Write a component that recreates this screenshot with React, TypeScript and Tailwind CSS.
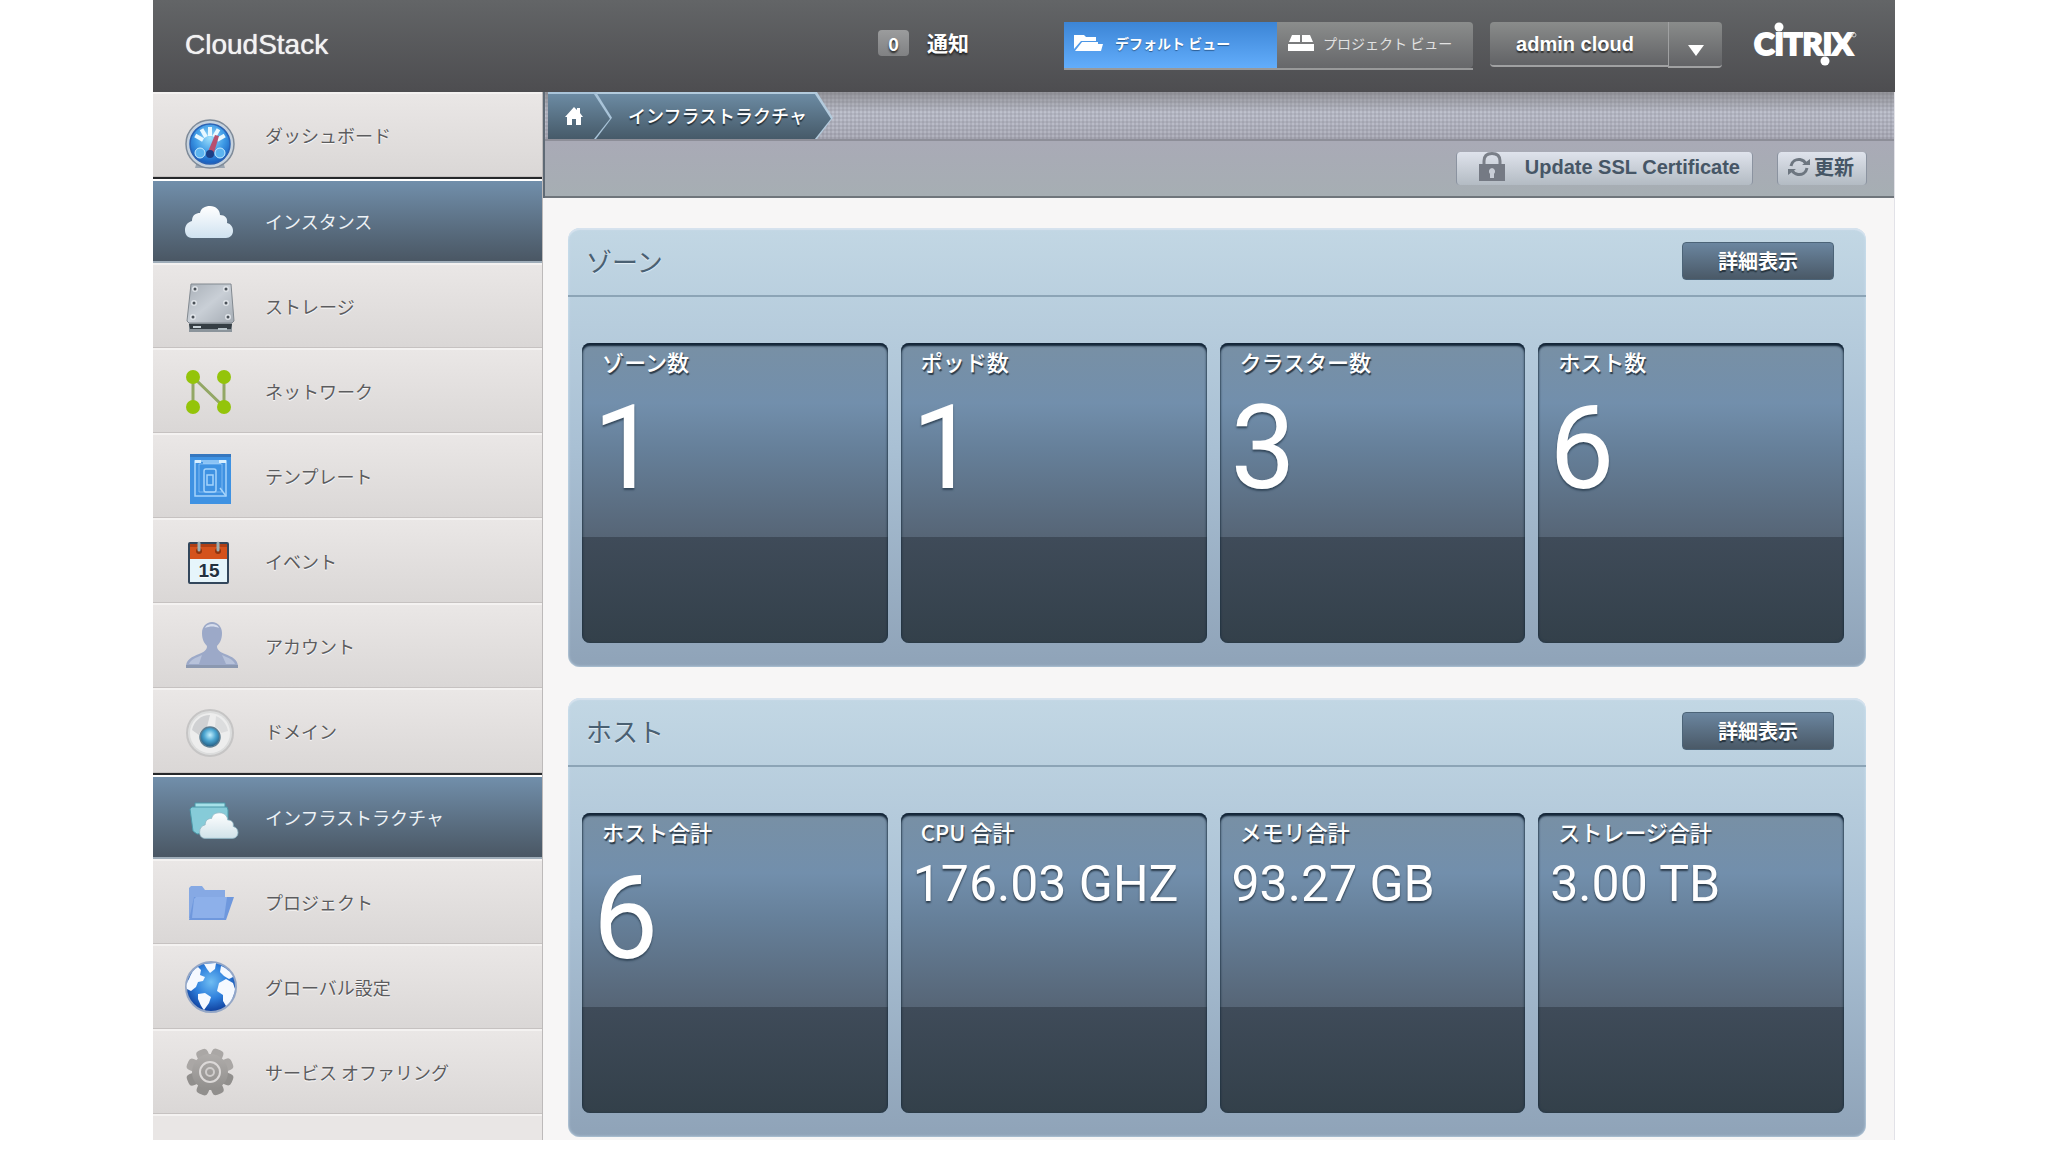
import type { ReactNode } from "react";

const cloudPath =
  "M9 53 C4 53 2 49 2 45 C2 40 5 37 9 36 C9 30 13 28 17 28 C18 23 22 21 27 21 C33 21 37 25 37 30 C42 30 45 33 44 38 C48 39 50 42 50 46 C50 50 47 53 43 53 Z";

function IconBox({ children }: { children: ReactNode }) {
  return (
    <svg viewBox="0 0 52 72" className="h-[72px] w-[52px] shrink-0 overflow-visible" aria-hidden="true">
      {children}
    </svg>
  );
}

function DashboardIcon() {
  const ticks = [-150, -120, -90, -60, -30];
  return (
    <IconBox>
      <defs>
        <radialGradient id="gauge" cx="0.5" cy="0.35" r="0.6">
          <stop offset="0" stopColor="#9fe0fb" />
          <stop offset="0.6" stopColor="#3f9be6" />
          <stop offset="1" stopColor="#1c66c4" />
        </radialGradient>
      </defs>
      <path d="M14 62 L40 62 L42 69 L12 69 Z" fill="#9aa5b1" />
      <circle cx="27" cy="45" r="24" fill="#c6d2de" stroke="#7f8b99" strokeWidth="1.5" />
      <circle cx="27" cy="45" r="20" fill="url(#gauge)" stroke="#2a62b4" strokeWidth="1.5" />
      {ticks.map((t) => (
        <line key={t} x1="35" y1="45" x2="44" y2="45" stroke="#e8f8ff" strokeWidth="4" transform={`rotate(${t} 27 45)`} />
      ))}
      <circle cx="17" cy="54" r="5" fill="#5cb4f0" stroke="#c8ecff" strokeWidth="1" />
      <circle cx="37" cy="54" r="5" fill="#5cb4f0" stroke="#c8ecff" strokeWidth="1" />
      <path d="M24 55 L32 36 L36 37 L30 57 Z" fill="#b8506f" />
      <circle cx="27" cy="55" r="4" fill="#1c3f86" />
    </IconBox>
  );
}

function CloudIcon() {
  return (
    <IconBox>
      <defs>
        <linearGradient id="cloud" x1="0" y1="0" x2="0" y2="1">
          <stop offset="0" stopColor="#ffffff" />
          <stop offset="1" stopColor="#cfe2f0" />
        </linearGradient>
      </defs>
      <path d={cloudPath} fill="url(#cloud)" />
    </IconBox>
  );
}

function StorageIcon() {
  const screws = [
    [12, 19],
    [43, 19],
    [11, 33],
    [43, 33],
    [10, 47],
    [45, 47],
  ];
  return (
    <IconBox>
      <defs>
        <linearGradient id="plate" x1="0" y1="0" x2="1" y2="1">
          <stop offset="0" stopColor="#a9b0b8" />
          <stop offset="0.5" stopColor="#c9cfd6" />
          <stop offset="1" stopColor="#a4abb3" />
        </linearGradient>
      </defs>
      <path d="M6 52 L49 52 L49 62 L6 62 Z" fill="#8b949b" />
      <path d="M6 54 L49 54 L48 59 L7 59 Z" fill="#353e44" />
      <path d="M8 14 L48 14 L51 51 L49 53 L6 53 L4 51 Z" fill="url(#plate)" stroke="#828990" strokeWidth="1" />
      {screws.map(([x, y]) => (
        <g key={`${x}-${y}`}>
          <circle cx={x} cy={y} r="3" fill="#dfe3e8" />
          <circle cx={x} cy={y} r="1.5" fill="#4a5158" />
        </g>
      ))}
      <rect x="10" y="56" width="8" height="2" fill="#c8d2d8" />
      <rect x="35" y="58" width="9" height="2" fill="#b7c2c8" />
    </IconBox>
  );
}

function NetworkIcon() {
  return (
    <IconBox>
      <path d="M10 52 V22 M13 25 L41 52 V22" fill="none" stroke="#93a765" strokeWidth="3" />
      <circle cx="10" cy="22" r="7" fill="#94c40a" />
      <circle cx="41" cy="22" r="7" fill="#94c40a" />
      <circle cx="10" cy="52" r="7" fill="#94c40a" />
      <circle cx="41" cy="52" r="7" fill="#94c40a" />
    </IconBox>
  );
}

function TemplateIcon() {
  return (
    <IconBox>
      <rect x="7" y="14" width="41" height="50" fill="#3f92e2" />
      <rect x="7" y="14" width="41" height="3" fill="#3577bf" />
      <g fill="none" stroke="#a5d4fb">
        <path d="M12 21 H43 V56 H12 Z" strokeWidth="1.5" />
        <path d="M16 24 H39 V52 H16 Z" strokeWidth="1" strokeOpacity="0.6" />
        <rect x="21" y="29" width="12" height="23" rx="2" strokeWidth="1.5" />
        <rect x="24" y="35" width="6" height="10" strokeWidth="1.5" />
        <path d="M37 48 L43 56 M20 23 H38" strokeWidth="1.5" />
      </g>
      <path d="M12 20 H18 V23 H12 Z M36 20 H43 V23 H36 Z" fill="#d8efff" />
    </IconBox>
  );
}

function EventIcon() {
  return (
    <IconBox>
      <rect x="6" y="18" width="39" height="40" rx="1" fill="#e6f5fb" stroke="#33475c" strokeWidth="2" />
      <path d="M7 19 H44 V34 H7 Z" fill="#d4521c" />
      <path d="M7 19 H44 V22 H7 Z" fill="#b03f14" />
      <circle cx="16" cy="26" r="3" fill="#8c3410" />
      <circle cx="35" cy="26" r="3" fill="#8c3410" />
      <path d="M16 25 V18 M35 25 V18" stroke="#9db0b4" strokeWidth="3" strokeLinecap="round" />
      <text x="26" y="52" textAnchor="middle" fontSize="19" fontWeight="700" fontFamily="Liberation Sans, sans-serif" fill="#23313f">
        15
      </text>
    </IconBox>
  );
}

function AccountIcon() {
  return (
    <IconBox>
      <path
        d="M29 12 C35 12 39 17 39 23 C39 29 37 33 34 36 C34 40 37 42 42 44 C49 47 55 49 55 57 L3 57 C3 49 9 47 16 44 C21 42 24 40 24 36 C21 33 19 29 19 23 C19 17 23 12 29 12 Z"
        fill="#9ca9c8"
      />
      <path d="M22 18 C23 15 26 14 29 14 C32 14 35 15 36 18 C31 16 27 16 22 18 Z" fill="#d6dded" />
      <path d="M6 54 C8 49 13 48 19 45 L16 54 Z M52 54 C50 49 45 48 39 45 L43 54 Z" fill="#b7c2da" />
      <path d="M3 55 H55 V58 H3 Z" fill="#8b98b0" />
    </IconBox>
  );
}

function DomainIcon() {
  return (
    <IconBox>
      <defs>
        <radialGradient id="lens" cx="0.5" cy="0.4" r="0.6">
          <stop offset="0" stopColor="#c4f1ff" />
          <stop offset="0.5" stopColor="#4ba4cf" />
          <stop offset="1" stopColor="#20597f" />
        </radialGradient>
      </defs>
      <circle cx="27" cy="38" r="23" fill="#dcdddd" stroke="#c6c5c5" strokeWidth="2" />
      <circle cx="27" cy="38" r="20" fill="#ededed" />
      <path d="M9 35 C11 26 18 20 27 20 L24 32 C20 33 17 36 16 40 Z" fill="#d0d1d3" />
      <path d="M33 21 C40 24 44 30 45 36 L38 38 C37 35 35 33 32 32 Z" fill="#dcddde" />
      <circle cx="27" cy="42" r="10" fill="url(#lens)" stroke="#5d7e92" strokeWidth="1.5" />
    </IconBox>
  );
}

function InfrastructureIcon() {
  return (
    <IconBox>
      <defs>
        <linearGradient id="infraCloud" x1="0" y1="0" x2="0" y2="1">
          <stop offset="0" stopColor="#ffffff" />
          <stop offset="1" stopColor="#d0e2e9" />
        </linearGradient>
      </defs>
      <path d="M12 22 H42 V32 H12 Z" fill="#a6e0e8" stroke="#4b98a8" strokeWidth="1" />
      <path d="M7 28 L9 26 H44 L45 29 V50 L14 53 L10 50 Z" fill="#86cbd8" stroke="#4b98a8" strokeWidth="1" />
      <g transform="translate(15 15) scale(0.8)">
        <path d={cloudPath} fill="url(#infraCloud)" stroke="#8fb6c4" strokeWidth="1" />
      </g>
    </IconBox>
  );
}

function ProjectIcon() {
  return (
    <IconBox>
      <path d="M6 22 L8 20 H19 L22 24 H42 V52 H6 Z" fill="#86a9e4" />
      <path d="M11 31 L51 31 L43 54 L6 54 Z" fill="#6f98dd" />
      <path d="M13 31 H44 L41 52 H9 L11 33 Z" fill="#8db0ea" />
    </IconBox>
  );
}

function GlobeIcon() {
  return (
    <IconBox>
      <defs>
        <radialGradient id="globe" cx="0.5" cy="0.4" r="0.6">
          <stop offset="0" stopColor="#6fbdf2" />
          <stop offset="0.55" stopColor="#2e7fdc" />
          <stop offset="1" stopColor="#0f3f9c" />
        </radialGradient>
      </defs>
      <circle cx="28" cy="36" r="25" fill="url(#globe)" stroke="#93a6c6" strokeWidth="2" />
      <g fill="#f5f9ff">
        <path d="M6 28 C8 22 11 18 15 16 L18 19 L17 24 L22 26 L20 30 L15 31 L13 36 L8 40 L4 38 C3 34 4 31 6 28 Z" />
        <path d="M21 13 L33 12 L32 18 L27 22 L24 18 Z" />
        <path d="M38 15 C43 17 48 21 50 26 L46 28 L41 25 L37 21 Z" />
        <path d="M36 32 L43 28 L50 32 L52 38 C51 46 47 52 43 55 L40 50 L40 44 L34 40 Z" />
        <path d="M15 43 L22 42 L28 46 L26 52 L21 59 C18 56 17 52 15 48 Z" />
      </g>
    </IconBox>
  );
}

function GearIcon() {
  const teeth = [22, 67, 112, 157, 202, 247, 292, 337];
  return (
    <IconBox>
      <defs>
        <linearGradient id="gear" gradientUnits="userSpaceOnUse" x1="0" y1="12" x2="0" y2="60">
          <stop offset="0" stopColor="#b5b2b0" />
          <stop offset="1" stopColor="#8b8987" />
        </linearGradient>
      </defs>
      {teeth.map((t) => (
        <rect key={t} x="21" y="12" width="12" height="14" rx="4" fill={t > 90 && t < 270 ? "#918f8d" : "#aaa7a5"} transform={`rotate(${t} 27 36)`} />
      ))}
      <circle cx="27" cy="36" r="18" fill="url(#gear)" />
      <circle cx="27" cy="36" r="10" fill="none" stroke="#dcd9d8" strokeWidth="2" />
      <circle cx="27" cy="36" r="4" fill="none" stroke="#d0cdcc" strokeWidth="2" />
    </IconBox>
  );
}

type NavItem = { label: string; icon: ReactNode; active?: boolean };

const navItems: NavItem[] = [
  { label: "ダッシュボード", icon: <DashboardIcon /> },
  { label: "インスタンス", icon: <CloudIcon />, active: true },
  { label: "ストレージ", icon: <StorageIcon /> },
  { label: "ネットワーク", icon: <NetworkIcon /> },
  { label: "テンプレート", icon: <TemplateIcon /> },
  { label: "イベント", icon: <EventIcon /> },
  { label: "アカウント", icon: <AccountIcon /> },
  { label: "ドメイン", icon: <DomainIcon /> },
  { label: "インフラストラクチャ", icon: <InfrastructureIcon />, active: true },
  { label: "プロジェクト", icon: <ProjectIcon /> },
  { label: "グローバル設定", icon: <GlobeIcon /> },
  { label: "サービス オファリング", icon: <GearIcon /> },
];

function Sidebar() {
  return (
    <nav aria-label="メイン" className="w-[390px] shrink-0 border-r border-[#bdbaba] bg-[#e9e6e5]">
      <ul>
        {navItems.map((item) => (
          <li key={item.label}>
            {item.active ? (
              <div className="border-t-2 border-[#26282b]">
                <a
                  href="#"
                  aria-current="page"
                  className="flex h-[84px] items-center gap-[30px] border-t-2 border-b-2 border-t-white border-b-[#9fadb9] bg-linear-to-b from-[#718fab] to-[#4a5764] bg-clip-padding pl-[30px] text-lg text-[#eef3f7]"
                >
                  {item.icon}
                  {item.label}
                </a>
              </div>
            ) : (
              <a
                href="#"
                className="flex h-[85px] items-center gap-[30px] border-t-2 border-b border-t-[#f4f2f1] border-b-[#c6c2c1] bg-linear-to-b from-[#eae7e6] to-[#dad7d6] pl-[30px] text-lg text-[#5c5c5e] [text-shadow:0_1px_1px_#fff]"
              >
                {item.icon}
                {item.label}
              </a>
            )}
          </li>
        ))}
      </ul>
      <div className="h-[26px] border-t-2 border-[#f4f2f1]" />
    </nav>
  );
}

function CitrixLogo() {
  return (
    <svg viewBox="0 0 104 48" className="h-12 w-[104px]" role="img" aria-label="CITRIX">
      <g fill="#fff">
        <text x="1" y="36" fontSize="31" fontWeight="900" fontFamily="Lato, sans-serif" stroke="#fff" strokeWidth="2">
          CITRIX
        </text>
        <circle cx="26" cy="8" r="4.5" />
        <circle cx="72" cy="42" r="4.5" />
        <circle cx="101" cy="16" r="2" fill="none" stroke="#c5c5c5" strokeWidth="1" />
      </g>
    </svg>
  );
}

function Header() {
  return (
    <header className="flex h-[92px] bg-linear-to-b from-[#636567] to-[#4d4d50] pr-[38px] pl-8 text-white">
      <h1 className="mt-[15px] font-['Liberation_Sans',sans-serif] text-[28px] leading-[60px] text-[#f2f2f2] [text-shadow:0_0_1px_#fff]">
        CloudStack
      </h1>
      <a href="#" className="mt-[27px] ml-auto flex h-8 items-center gap-[18px] text-[21px] font-bold [text-shadow:0_2px_2px_#222]">
        <span className="flex h-[26px] w-[31px] items-center justify-center rounded-sm bg-linear-to-b from-[#9b9c9d] to-[#808183] text-lg">
          0
        </span>
        通知
      </a>
      <div className="mt-[22px] ml-[95px] flex h-12 border-b-2 border-[#98999a] text-sm" role="group" aria-label="ビュー">
        <button type="button" className="flex w-[213px] items-center gap-3 bg-linear-to-b from-[#3c85d6] to-[#62adfb] pb-1 pl-[9px] font-bold [text-shadow:0_1px_1px_#2c5c92]">
          <svg viewBox="0 0 30 18" className="h-[18px] w-[30px]" fill="#fff" aria-hidden="true">
            <path d="M1 1 H11 L13 3 H23 V7 H8 L1 15 Z" />
            <path d="M9 8 H25 V10 H30 L28 17 H2 Z" />
          </svg>
          デフォルト ビュー
        </button>
        <button type="button" className="flex w-[196px] items-center gap-[9px] rounded-r-sm bg-linear-to-b from-[#8b8d8c] to-[#66676a] pb-1 pl-[11px] text-[#e2e2e2]">
          <svg viewBox="0 0 26 18" className="h-[18px] w-[26px]" fill="#fff" aria-hidden="true">
            <path d="M4 1 H12 V8 H1 Z M14 1 H22 L25 8 H14 Z M0 10 H26 V17 H0 Z" />
          </svg>
          プロジェクト ビュー
        </button>
      </div>
      <div className="mt-[22px] ml-[17px] flex h-[46px]">
        <button
          type="button"
          className="h-[45px] w-[178px] rounded-l-sm border-b-2 border-[#a0a1a2] bg-linear-to-b from-[#8a8c8b] to-[#626366] pr-2 font-['Liberation_Sans',sans-serif] text-xl font-bold [text-shadow:0_2px_1px_#333]"
        >
          admin cloud
        </button>
        <button
          type="button"
          aria-label="ユーザー メニュー"
          className="flex w-[54px] items-center justify-center rounded-r-sm border-b-2 border-l border-[#a0a1a2] bg-linear-to-b from-[#8a8c8b] to-[#626366] pt-3"
        >
          <svg viewBox="0 0 16 11" className="h-[11px] w-4" fill="#fff" aria-hidden="true">
            <path d="M0 0 H16 L8 11 Z" />
          </svg>
        </button>
      </div>
      <div className="mt-[19px] ml-[31px]">
        <CitrixLogo />
      </div>
    </header>
  );
}

function Breadcrumbs() {
  return (
    <nav
      aria-label="パンくずリスト"
      className="h-[49px] border-b-2 border-[#8d8e98] bg-[#aeb0bb] bg-[linear-gradient(to_bottom,#808083b0,#c0c4d240_45%,#8d8b9850),radial-gradient(#a0a1ad_1px,transparent_1px),radial-gradient(#c0c2ce_1px,transparent_1px)] bg-[size:auto,4px_4px,4px_4px] bg-[position:0_0,0_0,2px_2px]"
    >
      <ol className="flex h-full pl-[3px]">
        <li className="z-10 bg-[#a9c4d9] pr-0.5 [clip-path:polygon(0_0,calc(100%-16px)_0,100%_55%,calc(100%-16px)_100%,0_100%)]">
          <a
            href="#"
            aria-label="ホーム"
            className="mt-0.5 flex h-[45px] w-[62px] items-center bg-linear-to-b from-[#6c8ba3] to-[#465a69] pb-0.5 pl-4 [clip-path:polygon(0_0,calc(100%-16px)_0,100%_55%,calc(100%-16px)_100%,0_100%)]"
          >
            <svg viewBox="0 0 20 20" className="h-5 w-5" fill="#fff" aria-hidden="true">
              <path d="M10 1 L13 4 V2 H16 V7 L19 11 H17 V19 H12 V13 H8 V19 H3 V11 H1 Z" />
            </svg>
          </a>
        </li>
        <li className="-ml-[17px] bg-[#b3cbdd] pr-0.5 [clip-path:polygon(0_0,calc(100%-16px)_0,100%_55%,calc(100%-16px)_100%,0_100%)]">
          <a
            href="#"
            className="mt-0.5 flex h-[45px] items-center bg-linear-to-b from-[#6c8ba3] to-[#465a69] pr-6 pb-1 pl-[33px] text-lg leading-none font-medium text-white [clip-path:polygon(0_0,calc(100%-16px)_0,100%_55%,calc(100%-16px)_100%,0_100%)] [text-shadow:0_2px_1px_#24323d]"
          >
            インフラストラクチャ
          </a>
        </li>
      </ol>
    </nav>
  );
}

const toolButton =
  "flex h-[33px] items-center rounded-sm border-x border-[#8b93a0] bg-linear-to-b from-[#dfe3ec] to-[#b3bbc3] pb-1 text-xl leading-none font-bold text-[#465666]";

function Toolbar() {
  return (
    <div className="flex h-[57px] items-start justify-end gap-6 border-b-2 border-[#6f757b] bg-linear-to-b from-[#a9aab6] to-[#a6aeb3] pt-[11px] pr-[27px]">
      <button type="button" className={`${toolButton} gap-5 pr-3 pl-[22px] font-['Liberation_Sans',sans-serif]`}>
        <svg viewBox="0 0 26 30" className="h-[30px] w-[26px]" aria-hidden="true">
          <path d="M5 14 V9 C5 4 8 1.500 13 1.500 C18 1.500 21 4 21 9 V14" fill="none" stroke="#7a7f88" strokeWidth="3" />
          <rect x="0" y="12" width="26" height="17" fill="#757a84" />
          <path d="M13 16 A3.500 3.500 0 0 1 15 22 V26 H11 V22 A3.500 3.500 0 0 1 13 16 Z" fill="#c8cdd6" />
        </svg>
        Update SSL Certificate
      </button>
      <button type="button" className={`${toolButton} gap-1 pr-3 pl-2.5`}>
        <svg viewBox="0 0 22 20" className="h-5 w-[22px]" fill="none" stroke="#6d7680" strokeWidth="3" aria-hidden="true">
          <path d="M3 9 C4 4 8 2 12 2.500 C15 3 17 4.500 18 7" />
          <path d="M19 11 C18 16 14 18 10 17.500 C7 17 5 15.500 4 13" />
          <path d="M14 8 H22 V2 Z M8 12 H0 V18 Z" fill="#6d7680" stroke="none" />
        </svg>
        更新
      </button>
    </div>
  );
}

type Stat = { label: string; value: string; large?: boolean };

function StatCard({ label, value, large }: Stat) {
  return (
    <div className="h-[300px] rounded-lg bg-[linear-gradient(to_bottom,#7890a5_0,#728fac_20%,#66809a_35%,#566576_194px,#3f4b59_194px,#33404a_100%)] text-white shadow-[inset_0_3px_2px_#142638,inset_0_0_3px_#1f3345]">
      <dt className="pt-1 pl-5 text-[22px] leading-7 font-medium [text-shadow:1px_2px_1px_#2c3b49]">{label}</dt>
      {large ? (
        <dd className="pt-4 pl-[11px] font-[Roboto,sans-serif] text-[116px] leading-[114px] [text-shadow:0_2px_2px_#33475a]">
          {value}
        </dd>
      ) : (
        <dd className="pt-[13px] pl-3 font-[Roboto,sans-serif] text-[50px] leading-[52px] whitespace-nowrap [text-shadow:0_2px_2px_#2b3c4c]">
          {value}
        </dd>
      )}
    </div>
  );
}

function Panel({ title, stats }: { title: string; stats: Stat[] }) {
  return (
    <section className="rounded-xl bg-linear-to-b from-[#c2d7e4] via-[#a9c0d4] to-[#8fa3b8] shadow-[inset_0_2px_1px_#d6e2ee,inset_0_0_3px_#cfe4f2]">
      <div className="flex h-[69px] items-center justify-between border-b-2 border-[#8ca4b6] pr-8 pb-0.5 pl-[18px]">
        <h2 className="text-[26px] text-[#4a6072] [text-shadow:0_1px_1px_#e4eff7]">{title}</h2>
        <button
          type="button"
          className="h-[38px] w-[152px] rounded-sm border border-[#4c6478] bg-linear-to-b from-[#6b86a0] to-[#4a5967] text-xl leading-none font-bold text-white [text-shadow:0_2px_1px_#26343f]"
        >
          詳細表示
        </button>
      </div>
      <dl className="grid grid-cols-4 gap-[13px] pt-[46px] pr-[22px] pb-6 pl-3.5">
        {stats.map((s) => (
          <StatCard key={s.label} {...s} />
        ))}
      </dl>
    </section>
  );
}

const zoneStats: Stat[] = [
  { label: "ゾーン数", value: "1", large: true },
  { label: "ポッド数", value: "1", large: true },
  { label: "クラスター数", value: "3", large: true },
  { label: "ホスト数", value: "6", large: true },
];

const hostStats: Stat[] = [
  { label: "ホスト合計", value: "6", large: true },
  { label: "CPU 合計", value: "176.03 GHZ" },
  { label: "メモリ合計", value: "93.27 GB" },
  { label: "ストレージ合計", value: "3.00 TB" },
];

export default function App() {
  return (
    <div className="min-h-screen bg-white px-[153px] font-['Noto_Sans_CJK_JP',sans-serif]">
      <Header />
      <div className="flex border-r border-[#e2e2e8]">
        <Sidebar />
        <main className="min-w-0 flex-1 bg-[#f7f6f6]">
          <div className="border-l-2 border-[#5f6a75]">
            <Breadcrumbs />
            <Toolbar />
          </div>
          <div className="flex flex-col gap-[31px] pt-[30px] pr-7 pl-[25px]">
            <Panel title="ゾーン" stats={zoneStats} />
            <Panel title="ホスト" stats={hostStats} />
          </div>
        </main>
      </div>
    </div>
  );
}
